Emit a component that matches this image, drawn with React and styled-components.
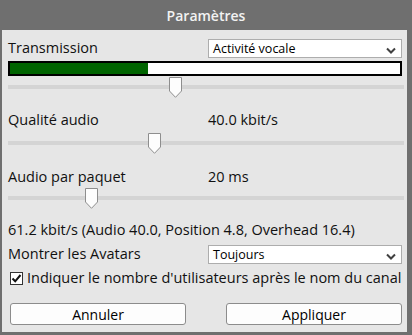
import React, { useState } from 'react'
import styled, { createGlobalStyle } from 'styled-components'

const GlobalStyle = createGlobalStyle`
  html, body {
    margin: 0;
    padding: 0;
    background: #6f6f6f;
  }
  * {
    box-sizing: border-box;
  }
`

const font = `"Open Sans", "Noto Sans", "Liberation Sans", sans-serif`

function Chevron() {
  return (
    <svg width="10" height="7" viewBox="0 0 10 7">
      <path d="M1 1.5 L5 5.5 L9 1.5" fill="none" stroke="#404040" strokeWidth="2" />
    </svg>
  )
}

function Select({ value }) {
  return (
    <SelectBox>
      <span>{value}</span>
      <Chevron />
    </SelectBox>
  )
}

function Slider({ value }) {
  return (
    <SliderWrap>
      <Track />
      <Thumb style={{ left: `calc(${value * 100}% - ${value * 13}px)` }}>
        <svg width="13" height="21" viewBox="0 0 13 21">
          <path d="M0.5 0.5 H12.5 V14 L6.5 20.3 L0.5 14 Z" fill="#fdfdfd" stroke="#8e8e8e" />
        </svg>
      </Thumb>
    </SliderWrap>
  )
}

function App() {
  const [checked, setChecked] = useState(true)

  return (
    <>
      <GlobalStyle />
      <Window>
        <TitleBar>Paramètres</TitleBar>
        <Body>
          <Row $mt={0} $h={19}>
            <Label>Transmission</Label>
            <Select value="Activité vocale" />
          </Row>
          <Meter $mt={3}>
            <MeterFill style={{ width: '35.5%' }} />
          </Meter>
          <SliderRow $mt={1}>
            <Slider value={0.42} />
          </SliderRow>

          <Row $mt={12} $h={20}>
            <Label>Qualité audio</Label>
            <Value>40.0 kbit/s</Value>
          </Row>
          <SliderRow $mt={3}>
            <Slider value={0.365} />
          </SliderRow>

          <Row $mt={13} $h={20}>
            <Label>Audio par paquet</Label>
            <Value>20 ms</Value>
          </Row>
          <SliderRow $mt={1}>
            <Slider value={0.2} />
          </SliderRow>

          <Row $mt={11} $h={20}>
            <Label>61.2 kbit/s (Audio 40.0, Position 4.8, Overhead 16.4)</Label>
          </Row>

          <Row $mt={5} $h={19}>
            <Label>Montrer les Avatars</Label>
            <Select value="Toujours" />
          </Row>

          <CheckRow $mt={4} onClick={() => setChecked(!checked)}>
            <CheckBox>
              {checked && (
                <svg width="11" height="11" viewBox="0 0 11 11">
                  <path d="M1.5 5.5 L4.2 8.3 L9.5 2" fill="none" stroke="#111" strokeWidth="2" />
                </svg>
              )}
            </CheckBox>
            <Label>Indiquer le nombre d'utilisateurs après le nom du canal</Label>
          </CheckRow>

          <ButtonRow $mt={15}>
            <Button>Annuler</Button>
            <Button>Appliquer</Button>
          </ButtonRow>
        </Body>
      </Window>
    </>
  )
}

export default App

const Window = styled.div`
  width: 412px;
  height: 335px;
  display: flex;
  flex-direction: column;
  background: #6f6f6f;
  font-family: ${font};
  color: #111;
`

const TitleBar = styled.div`
  height: 30px;
  display: flex;
  align-items: center;
  justify-content: center;
  color: #f2f2f2;
  font-size: 14px;
  font-weight: 600;
  padding-top: 1px;
`

const Body = styled.div`
  flex: 1;
  background: #e6e6e6;
  margin: 0 5px 3px 2px;
  padding: 9px 3px 7px 6px;
  display: flex;
  flex-direction: column;
`

const Row = styled.div`
  margin-top: ${p => p.$mt}px;
  height: ${p => p.$h}px;
  display: grid;
  grid-template-columns: 200px 1fr;
  align-items: center;
  padding-right: 2px;
`

const Label = styled.span`
  font-size: 14.5px;
  white-space: nowrap;
  line-height: 1;
`

const Value = styled.span`
  font-size: 14.5px;
  line-height: 1;
`

const SelectBox = styled.div`
  height: 19px;
  background: #fff;
  border: 1px solid #adadad;
  display: flex;
  align-items: center;
  justify-content: space-between;
  padding: 0 5px 0 4px;
  font-size: 12.5px;
  font-weight: 500;
  color: #000;
  svg {
    margin-top: 4px;
  }
`

const Meter = styled.div`
  margin-top: ${p => p.$mt}px;
  height: 15px;
  margin-right: 2px;
  border: 2px solid #000;
  background: #fff;
  display: flex;
`

const MeterFill = styled.div`
  background: #006400;
  height: 100%;
`

const SliderRow = styled.div`
  margin-top: ${p => p.$mt}px;
  height: 21px;
`

const SliderWrap = styled.div`
  position: relative;
  height: 21px;
`

const Track = styled.div`
  position: absolute;
  left: 0;
  right: 0;
  top: 8px;
  height: 4px;
  background: #d4d4d4;
`

const Thumb = styled.div`
  position: absolute;
  top: 0;
  width: 13px;
  height: 21px;
  svg {
    display: block;
  }
`

const CheckRow = styled.div`
  margin-top: ${p => p.$mt}px;
  height: 20px;
  display: flex;
  align-items: center;
  gap: 4px;
  padding-left: 2px;
  cursor: default;
`

const CheckBox = styled.div`
  width: 13px;
  height: 13px;
  border: 1px solid #333;
  background: #fff;
  display: flex;
  align-items: center;
  justify-content: center;
  flex-shrink: 0;
`

const ButtonRow = styled.div`
  margin-top: ${p => p.$mt}px;
  display: flex;
  justify-content: space-between;
  padding: 0 2px 0 2px;
`

const Button = styled.button`
  width: 176px;
  height: 22px;
  background: #fdfdfd;
  border: 1.5px solid #8c8c8c;
  border-radius: 3px;
  font-family: ${font};
  font-size: 14px;
  color: #000;
  padding: 0;
`
